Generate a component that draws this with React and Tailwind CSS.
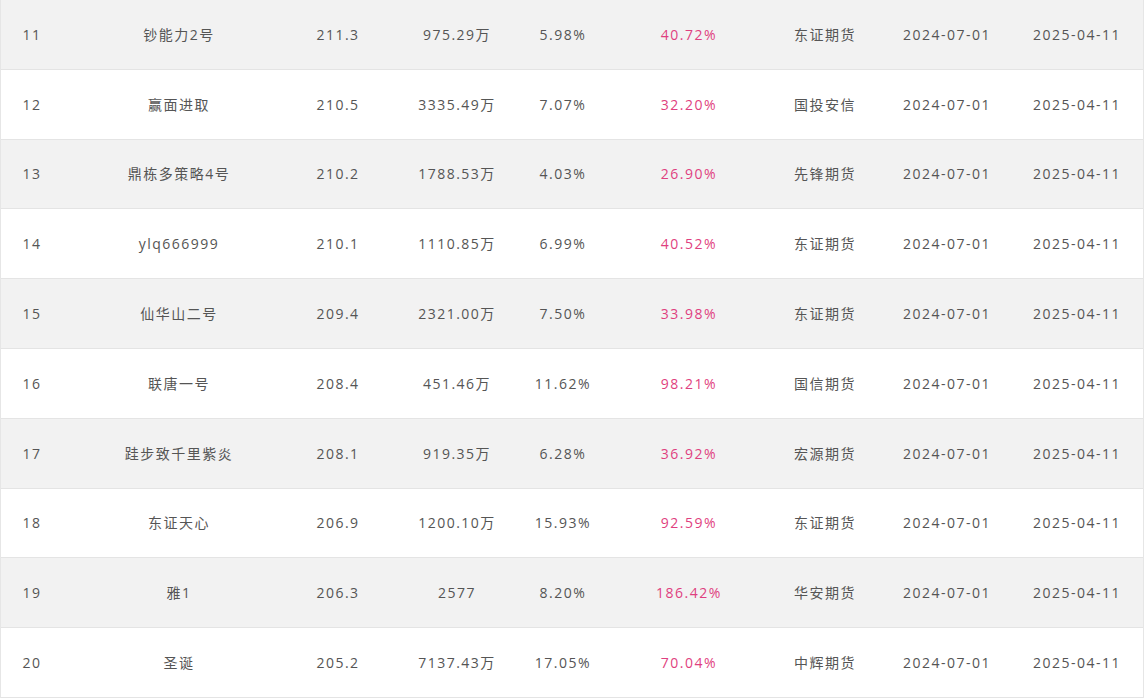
const ROWS = [
  { rank: 11, name: "钞能力2号", score: "211.3", scale: "975.29万", dd: "5.98%", ret: "40.72%", broker: "东证期货" },
  { rank: 12, name: "赢面进取", score: "210.5", scale: "3335.49万", dd: "7.07%", ret: "32.20%", broker: "国投安信" },
  { rank: 13, name: "鼎栋多策略4号", score: "210.2", scale: "1788.53万", dd: "4.03%", ret: "26.90%", broker: "先锋期货" },
  { rank: 14, name: "ylq666999", score: "210.1", scale: "1110.85万", dd: "6.99%", ret: "40.52%", broker: "东证期货" },
  { rank: 15, name: "仙华山二号", score: "209.4", scale: "2321.00万", dd: "7.50%", ret: "33.98%", broker: "东证期货" },
  { rank: 16, name: "联唐一号", score: "208.4", scale: "451.46万", dd: "11.62%", ret: "98.21%", broker: "国信期货" },
  { rank: 17, name: "跬步致千里紫炎", score: "208.1", scale: "919.35万", dd: "6.28%", ret: "36.92%", broker: "宏源期货" },
  { rank: 18, name: "东证天心", score: "206.9", scale: "1200.10万", dd: "15.93%", ret: "92.59%", broker: "东证期货" },
  { rank: 19, name: "雅1", score: "206.3", scale: "2577", dd: "8.20%", ret: "186.42%", broker: "华安期货" },
  { rank: 20, name: "圣诞", score: "205.2", scale: "7137.43万", dd: "17.05%", ret: "70.04%", broker: "中辉期货" },
];

export default function App() {
  return (
    <div
      className="w-[1145px] h-[699px] overflow-hidden bg-white text-[14px] tracking-[1.5px] text-[#555]"
      style={{ fontFamily: '"Open Sans", "Noto Sans CJK SC", sans-serif' }}
    >
      <div className="w-[1144px] border-x border-[#e6e6e6]">
        {ROWS.map((r, i) => (
          <div
            key={r.rank}
            className={`grid grid-cols-[62px_232px_86px_152px_60px_192px_80px_164px_96px_1fr] items-center h-[69.8px] border-b border-[#e4e4e4] whitespace-nowrap ${i % 2 === 0 ? "bg-[#f2f2f2]" : "bg-white"}`}
          >
            <div className="text-center">{r.rank}</div>
            <div className="text-center">{r.name}</div>
            <div className="text-center">{r.score}</div>
            <div className="text-center">{r.scale}</div>
            <div className="flex justify-center">{r.dd}</div>
            <div className="text-center text-[#df3f80]">{r.ret}</div>
            <div className="flex justify-center">{r.broker}</div>
            <div className="text-center">2024-07-01</div>
            <div className="flex justify-center">2025-04-11</div>
            <div />
          </div>
        ))}
      </div>
    </div>
  );
}
